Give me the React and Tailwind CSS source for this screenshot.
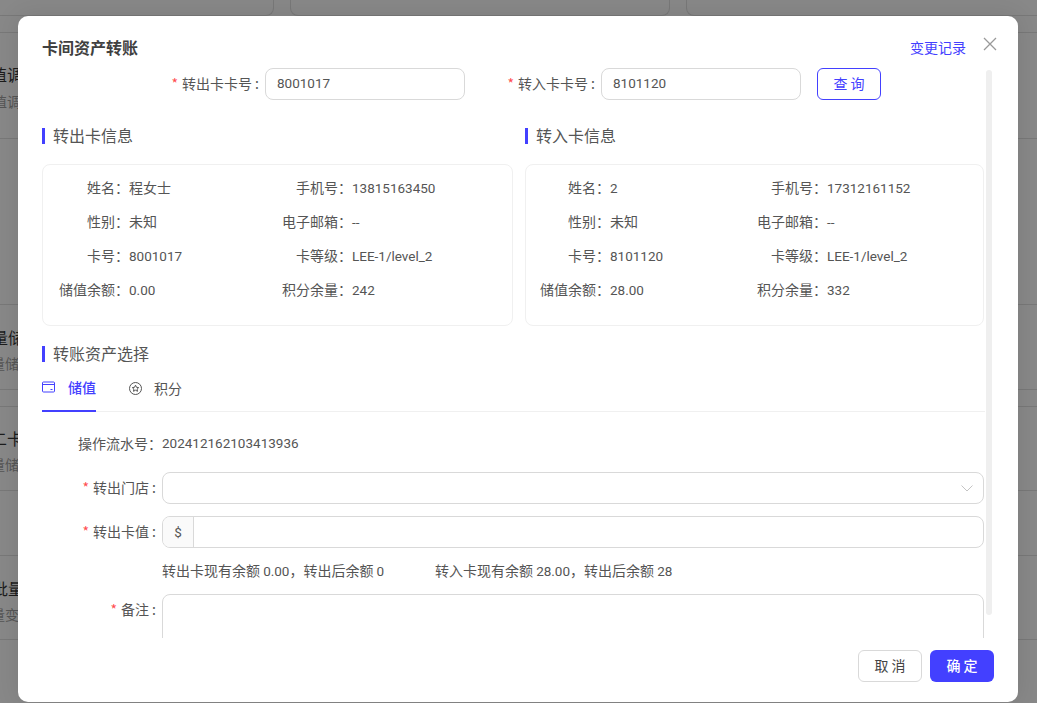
import React from 'react';

const BLUE = 'text-[#4340ff]';

// latin text in the reference is a bit narrower than anything installed
const N = ({ children }) => <span className="font-['Roboto',sans-serif] text-[13.5px]">{children}</span>;

const Star = () => <span className="text-[#ff4d4f] mr-1 text-[14px]">*</span>;

const Heading = ({ children }) => (
  <div className="flex items-center h-4">
    <span className="w-[3px] h-4 bg-[#4340ff] mr-2"></span>
    <span className="text-[16px] text-[#555] pb-0.5">{children}</span>
  </div>
);

const InfoCard = ({ cols, width, rows }) => (
  <div className={`${width} h-[162px] border border-[#f0f0f0] rounded-lg pt-[11px]`}>
    <div className={`grid ${cols} gap-y-3 -ml-px`}>
      {rows.map((r) => (
        <React.Fragment key={r[0]}>
          <div className="text-right h-[22px] leading-[22px]">{r[0]}：</div>
          <div className="h-[22px] leading-[22px]">{r[1]}</div>
          <div className="text-right h-[22px] leading-[22px]">{r[2]}：</div>
          <div className="h-[22px] leading-[22px]">{r[3]}</div>
        </React.Fragment>
      ))}
    </div>
  </div>
);

const FormLabel = ({ children, required }) => (
  <div className="w-[120px] flex justify-end items-center h-8 pb-0.5 pr-[7px]">
    {required && <Star />}
    <span>{children}</span>
    <span className="ml-[3px] w-[3px]">:</span>
  </div>
);

const BgRow = ({ height, title, sub, titleMl, subMl, top = 'pt-[21px]', gap = 'mt-[4px]' }) => (
  <div className={`${height} border-b border-[#787878] overflow-hidden whitespace-nowrap`}>
    {title && (
      <div className={top}>
        <div className={`${titleMl} text-[16px] leading-[22px] text-[#1c1c1c]`}>{title}</div>
        <div className={`${subMl} ${gap} text-[14px] leading-[22px] text-[#555]`}>{sub}</div>
      </div>
    )}
  </div>
);

export default function App() {
  return (
    <div className="relative w-[1037px] h-[703px] overflow-hidden bg-[#888888] font-['Noto_Sans_CJK_SC',sans-serif] text-[14px] text-[#555]">
      {/* page behind the mask */}
      <div className="flex gap-4 h-[17px] -mt-px">
        <div className="w-[274px] border-r border-b border-[#787878] rounded-br-lg"></div>
        <div className="w-[380px] border-l border-r border-b border-[#787878] rounded-b-lg"></div>
        <div className="flex-1 border-l border-b border-[#787878] rounded-bl-lg"></div>
      </div>
      <div className="h-[17px] border-b border-[#787878]"></div>
      <BgRow height="h-[106px]" title="储值调整" sub="储值调整" titleMl="-ml-[25px]" subMl="-ml-[21px]" top="pt-[30px]" gap="mt-[5px]" />
      <BgRow height="h-[166px]" />
      <BgRow height="h-[85px]" title="批量储值" sub="批量储值" titleMl="-ml-[24px]" subMl="-ml-[23px]" />
      <BgRow height="h-[17px]" />
      <BgRow height="h-[84px]" title="第二卡片" sub="批量储值" titleMl="-ml-[25px]" subMl="-ml-[23px]" top="pt-[20px]" />
      <BgRow height="h-[65px]" />
      <BgRow height="h-[84px]" title="批量变更" sub="批量变更" titleMl="-ml-[8px]" subMl="-ml-[23px]" />

      {/* dialog */}
      <div className="absolute left-[18px] top-4 w-[1000px] h-[686px] bg-white rounded-[10px] shadow-[0_0_24px_rgba(0,0,0,0.1)] flex flex-col">
        <div className="h-[50px] shrink-0 flex items-center pl-6 pt-3 pr-[21px]">
          <div className="text-[16px] font-bold text-[#404040]">卡间资产转账</div>
          <div className={`ml-auto text-[14px] ${BLUE}`}>变更记录</div>
          <button className="ml-[17px] -mt-1.5 text-[#999]">
            <svg width="14" height="14" viewBox="0 0 14 14" fill="none" stroke="currentColor" strokeWidth="1.3">
              <path d="M1 1l12 12M13 1L1 13" />
            </svg>
          </button>
        </div>

        <div className="relative h-[572px] shrink-0 overflow-hidden pl-6 pr-[34px] pt-0.5">
          {/* scrollbar */}
          <div className="absolute right-[26px] top-[4px] w-[6px] h-[545px] rounded bg-[#efefef]"></div>

          <div className="flex items-center">
            <div className="w-[223px] flex justify-end items-center h-8 pb-0.5 pr-[7px]">
              <Star />
              <span>转出卡卡号</span>
              <span className="ml-[3px] w-[3px]">:</span>
            </div>
            <input readOnly value="8001017" className="w-[200px] h-8 border border-[#d9d9d9] rounded-lg px-[11px] pb-0.5 text-[#555] font-['Roboto',sans-serif] text-[13.5px] outline-none" />
            <div className="w-[136px] flex justify-end items-center h-8 pb-0.5 pr-[7px]">
              <Star />
              <span>转入卡卡号</span>
              <span className="ml-[3px] w-[3px]">:</span>
            </div>
            <input readOnly value="8101120" className="w-[200px] h-8 border border-[#d9d9d9] rounded-lg px-[11px] pb-0.5 text-[#555] font-['Roboto',sans-serif] text-[13.5px] outline-none" />
            <button className={`ml-4 w-16 h-8 pb-0.5 border border-[#4340ff] rounded-md ${BLUE}`}>查 询</button>
          </div>

          <div className="flex mt-7">
            <div className="w-[483px]"><Heading>转出卡信息</Heading></div>
            <Heading>转入卡信息</Heading>
          </div>

          <div className="flex gap-3 mt-5">
            <InfoCard
              width="w-[471px]"
              cols="grid-cols-[87px_153px_70px_1fr]"
              rows={[
                ['姓名', '程女士', '手机号', <N>13815163450</N>],
                ['性别', '未知', '电子邮箱', <N>--</N>],
                ['卡号', <N>8001017</N>, '卡等级', <N>LEE-1/level_2</N>],
                ['储值余额', <N>0.00</N>, '积分余量', <N>242</N>],
              ]}
            />
            <InfoCard
              width="w-[459px]"
              cols="grid-cols-[85px_147px_70px_1fr]"
              rows={[
                ['姓名', <N>2</N>, '手机号', <N>17312161152</N>],
                ['性别', '未知', '电子邮箱', <N>--</N>],
                ['卡号', <N>8101120</N>, '卡等级', <N>LEE-1/level_2</N>],
                ['储值余额', <N>28.00</N>, '积分余量', <N>332</N>],
              ]}
            />
          </div>

          <div className="mt-5"><Heading>转账资产选择</Heading></div>

          <div className="h-[50px] flex border-b border-[#f0f0f0] w-[943px]">
            <div className={`h-[50px] w-[54px] flex items-center pt-0.5 border-b-2 border-[#4340ff] ${BLUE} font-medium`}>
              <svg width="13" height="12" viewBox="0 0 13 12" fill="none" stroke="currentColor" strokeWidth="1" className="mr-[13px] shrink-0">
                <rect x="0.5" y="1" width="12" height="10" rx="1" />
                <path d="M0.5 3.5h12M8.5 8.5h2" />
              </svg>
              储值
            </div>
            <div className="ml-[33px] h-[50px] flex items-center pt-0.5">
              <svg width="13" height="13" viewBox="0 0 13 13" fill="none" stroke="currentColor" strokeWidth="1" className="mr-3 shrink-0">
                <circle cx="6.5" cy="6.5" r="6" />
                <path d="M6.5 3.2l1 2.1 2.2.3-1.6 1.5.4 2.2-2-1.1-2 1.1.4-2.2-1.6-1.5 2.2-.3z" />
              </svg>
              积分
            </div>
          </div>

          <div className="flex mt-5 h-[22px] leading-[22px]">
            <div className="w-[120px] text-right">操作流水号：</div>
            <N>202412162103413936</N>
          </div>

          <div className="flex mt-[18px]">
            <FormLabel required>转出门店</FormLabel>
            <div className="w-[822px] h-8 border border-[#d9d9d9] rounded-lg flex items-center justify-end pr-[10px]">
              <svg width="12" height="7" viewBox="0 0 12 7" fill="none" stroke="#c4c4c4" strokeWidth="1">
                <path d="M0.5 0.5l5.5 5.5 5.5-5.5" />
              </svg>
            </div>
          </div>

          <div className="flex mt-3">
            <FormLabel required>转出卡值</FormLabel>
            <div className="w-[822px] h-8 border border-[#d9d9d9] rounded-lg flex overflow-hidden">
              <div className="w-[31px] bg-[#fafafa] border-r border-[#d9d9d9] flex items-center justify-center"><N>$</N></div>
            </div>
          </div>

          <div className="flex mt-[11px] ml-[120px] h-[22px] leading-[22px]">
            <div className="w-[273px]">转出卡现有余额 <N>0.00</N>，转出后余额 <N>0</N></div>
            <div>转入卡现有余额 <N>28.00</N>，转出后余额 <N>28</N></div>
          </div>

          <div className="flex mt-[13px]">
            <FormLabel required>备注</FormLabel>
            <div className="w-[822px] h-[100px] border border-[#d9d9d9] rounded-lg"></div>
          </div>
        </div>

        <div className="flex justify-end gap-2 pt-3 pr-6">
          <button className="w-16 h-8 pb-0.5 border border-[#d9d9d9] rounded-md text-[#444]">取 消</button>
          <button className="w-16 h-8 pb-0.5 bg-[#4340ff] rounded-md text-white font-medium">确 定</button>
        </div>
      </div>
    </div>
  );
}
